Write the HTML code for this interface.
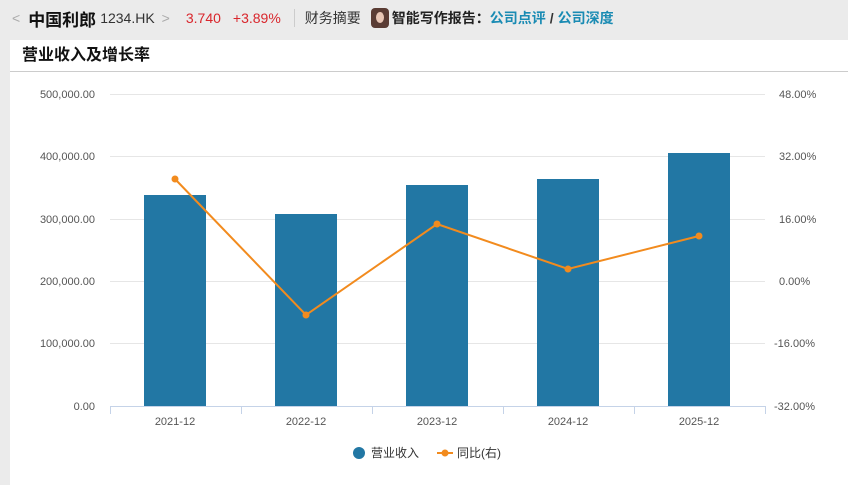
<!DOCTYPE html>
<html><head><meta charset="utf-8"><style>
*{margin:0;padding:0;box-sizing:border-box}
body{width:848px;height:485px;background:#ebebeb;font-family:"Liberation Sans","Noto Sans CJK SC",sans-serif;overflow:hidden;position:relative}
.top{position:absolute;left:0;top:0;height:36px;width:848px;display:flex;align-items:center;font-size:14px;color:#333;white-space:nowrap}
.card{position:absolute;left:10px;top:40px;width:838px;height:445px;background:#fff}
.title{height:32px;border-bottom:1px solid #ccc;padding-left:12px;font-size:16px;font-weight:bold;line-height:31px;color:#111}
</style></head><body>
<div class="top">
<span style="color:#aaa;margin-left:12px;font-size:14px">&lt;</span>
<span style="font-size:17px;font-weight:bold;color:#111;margin-left:8px">中国利郎</span>
<span style="margin-left:4px;color:#333">1234.HK</span>
<span style="color:#aaa;margin-left:7px">&gt;</span>
<span style="color:#d9262c;margin-left:16px">3.740</span>
<span style="color:#d9262c;margin-left:12px">+3.89%</span>
<span style="width:1px;height:18px;background:#ccc;margin-left:13px"></span>
<span style="margin-left:10px;color:#333">财务摘要</span>
<span style="width:18px;height:20px;border-radius:4px;background:#5a3c34;margin-left:10px;position:relative;overflow:hidden"><span style="position:absolute;left:5px;top:4px;width:8px;height:11px;border-radius:50%;background:#e8c6b5"></span></span>
<span style="margin-left:3px;font-weight:bold;color:#222">智能写作报告：</span>
<span style="font-weight:bold;color:#1a8bb3">公司点评</span>
<span style="font-weight:bold;color:#333;margin:0 4px">/</span>
<span style="font-weight:bold;color:#1a8bb3">公司深度</span>
</div>
<div class="card"><div class="title">营业收入及增长率</div></div>
<svg style="position:absolute;left:0;top:0" width="848" height="485" font-family="Liberation Sans, Noto Sans CJK SC, sans-serif" font-size="11" fill="#555">
<g stroke="#e6e6e6" stroke-width="1">
<line x1="110" y1="94.5" x2="765" y2="94.5"/><line x1="110" y1="156.5" x2="765" y2="156.5"/><line x1="110" y1="219.5" x2="765" y2="219.5"/><line x1="110" y1="281.5" x2="765" y2="281.5"/><line x1="110" y1="343.5" x2="765" y2="343.5"/>
</g>
<g text-anchor="end">
<text x="95" y="98">500,000.00</text><text x="95" y="160">400,000.00</text><text x="95" y="223">300,000.00</text><text x="95" y="285">200,000.00</text><text x="95" y="347">100,000.00</text><text x="95" y="410">0.00</text>
</g>
<g text-anchor="start">
<text x="779" y="98">48.00%</text><text x="779" y="160">32.00%</text><text x="779" y="223">16.00%</text><text x="779" y="285">0.00%</text><text x="774" y="347">-16.00%</text><text x="774" y="410">-32.00%</text>
</g>
<g fill="#2277a4">
<rect x="144" y="195" width="62" height="211"/><rect x="275" y="214" width="62" height="192"/><rect x="406" y="185" width="62" height="221"/><rect x="537" y="179" width="62" height="227"/><rect x="668" y="153" width="62" height="253"/>
</g>
<g stroke="#c5d3e8" stroke-width="1">
<line x1="110" y1="406.5" x2="765" y2="406.5"/>
<line x1="110.5" y1="406" x2="110.5" y2="414"/><line x1="241.5" y1="406" x2="241.5" y2="414"/><line x1="372.5" y1="406" x2="372.5" y2="414"/><line x1="503.5" y1="406" x2="503.5" y2="414"/><line x1="634.5" y1="406" x2="634.5" y2="414"/><line x1="765.5" y1="406" x2="765.5" y2="414"/>
</g>
<g text-anchor="middle">
<text x="175" y="425">2021-12</text><text x="306" y="425">2022-12</text><text x="437" y="425">2023-12</text><text x="568" y="425">2024-12</text><text x="699" y="425">2025-12</text>
</g>
<polyline points="175,179 306,315 437,224 568,269 699,236" fill="none" stroke="#f28b1e" stroke-width="2"/>
<g fill="#f28b1e"><circle cx="175" cy="179" r="3.5"/><circle cx="306" cy="315" r="3.5"/><circle cx="437" cy="224" r="3.5"/><circle cx="568" cy="269" r="3.5"/><circle cx="699" cy="236" r="3.5"/></g>
<ellipse cx="359" cy="453" rx="6" ry="6" fill="#2277a4"/>
<text x="371" y="457" fill="#333" font-size="12">营业收入</text>
<line x1="437" y1="453" x2="453" y2="453" stroke="#f28b1e" stroke-width="2"/><circle cx="445" cy="453" r="3.5" fill="#f28b1e"/>
<text x="457" y="457" fill="#333" font-size="12">同比(右)</text>
</svg>
</body></html>
